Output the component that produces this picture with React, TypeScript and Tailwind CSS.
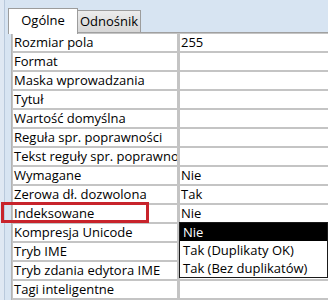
import React from 'react';

const rows: { label: string; value?: string }[] = [
  { label: 'Rozmiar pola', value: '255' },
  { label: 'Format' },
  { label: 'Maska wprowadzania' },
  { label: 'Tytuł' },
  { label: 'Wartość domyślna' },
  { label: 'Reguła spr. poprawności' },
  { label: 'Tekst reguły spr. poprawności' },
  { label: 'Wymagane', value: 'Nie' },
  { label: 'Zerowa dł. dozwolona', value: 'Tak' },
  { label: 'Indeksowane', value: 'Nie' },
  { label: 'Kompresja Unicode' },
  { label: 'Tryb IME' },
  { label: 'Tryb zdania edytora IME' },
  { label: 'Tagi inteligentne' },
];

const options = ['Nie', 'Tak (Duplikaty OK)', 'Tak (Bez duplikatów)'];

export default function App(): JSX.Element {
  return (
    <div
      className="relative flex w-[328px] h-[300px] overflow-hidden bg-[#d7e4f2] text-[13px] text-black"
      style={{ fontFamily: '"Open Sans", "Noto Sans", sans-serif' }}
    >
      <div className="w-[4px] shrink-0 bg-[#dfe8f3]" />
      <div className="w-px shrink-0 bg-[#b9c9dc]" />
      <div className="flex-1 flex flex-col pl-[3px]">
        {/* tabs */}
        <div className="flex items-end h-[33px] pt-[7px]">
          <div className="relative z-10 flex items-center justify-center w-[70px] h-[26px] -mb-px border border-b-0 border-[#9c9c9c] bg-white pb-[2px]">
            Ogólne
          </div>
          <div className="flex-1 flex items-end h-full border-b border-[#a0a0a0]">
            <div className="flex items-center justify-center w-[63px] h-[22px] border border-b-0 border-l-0 border-[#9c9c9c] bg-gradient-to-b from-[#ececec] to-[#d6d6d6]">
              Odnośnik
            </div>
          </div>
        </div>
        {/* property grid */}
        <div className="ml-[3px] flex-1 border-l border-[#b4b4b4] bg-[#c4c4c4] pt-px">
          <div className="grid grid-cols-[164px_1fr] gap-x-[3px] gap-y-[2px] pl-px">
            {rows.map((r) => (
              <React.Fragment key={r.label}>
                <div className="h-[17px] bg-white pl-px leading-[17px] whitespace-nowrap overflow-hidden">
                  {r.label}
                </div>
                <div className="h-[17px] bg-white pl-px leading-[17px] whitespace-nowrap overflow-hidden">
                  {r.value ?? ''}
                </div>
              </React.Fragment>
            ))}
          </div>
        </div>
      </div>

      {/* highlight around Indeksowane */}
      <div className="absolute left-[1px] top-[202px] w-[148px] h-[21px] border-[3px] border-[#c8232b]" />

      {/* open dropdown */}
      <div className="absolute left-[179px] top-[222px] w-[149px] border border-[#1a1a1a] bg-white">
        {options.map((o, i) => (
          <div
            key={o}
            className={
              i === 0
                ? 'h-[18px] pl-[3px] leading-[18px] bg-black text-white'
                : 'h-[18px] pl-[3px] leading-[18px]'
            }
          >
            {o}
          </div>
        ))}
      </div>
    </div>
  );
}
